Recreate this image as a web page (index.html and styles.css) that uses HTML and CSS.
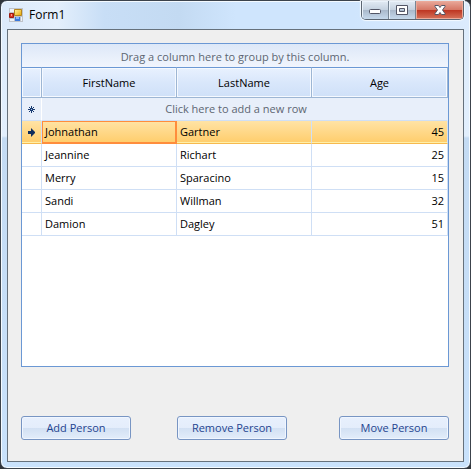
FILE: index.html
```html
<!DOCTYPE html>
<html lang="en">
<head>
<meta charset="utf-8">
<title>Form1</title>
<link rel="stylesheet" href="styles.css">
</head>
<body>
<div class="window">
  <header class="titlebar">
    <svg class="app-icon" width="14" height="14" viewBox="0 0 14 14" aria-hidden="true">
      <defs>
        <linearGradient id="gold" x2="1" y2="1"><stop offset="0" stop-color="#fff3a8"/><stop offset="1" stop-color="#e9a800"/></linearGradient>
      </defs>
      <path d="M0 0h14v14H0z" fill="#bfc3ca"/>
      <path d="M1 1h4v3H1zM1 11h4v2H1zM12 9h1v4h-1z" fill="#eef2f8"/>
      <path d="M5.500 1.500h7v6h-7z" fill="url(#gold)" stroke="#b5851c"/>
      <path d="M.5 5.500h4v4h-4z" fill="#dd3322" stroke="#9c1a12"/>
      <path d="M2 6h1v2H2z" fill="#ff9a85"/>
      <path d="M6 9h5v4H6z" fill="#3b78dc"/>
      <path d="M7 9h3v2H7z" fill="#8db8f5"/>
    </svg>
    <h1 class="title">Form1</h1>
    <div class="controls">
      <button class="control" type="button" aria-label="Minimize">
        <svg width="14" height="14" viewBox="0 0 14 14"><rect x="1.500" y="6.500" width="11" height="4" rx="1" fill="#fff" stroke="#535666"/></svg>
      </button>
      <button class="control" type="button" aria-label="Maximize">
        <svg width="14" height="14" viewBox="0 0 14 14"><path d="M1.500 2.500h11v9h-11zM4.500 5.500h5v3h-5z" fill="#fff" fill-rule="evenodd" stroke="#535666" stroke-linejoin="round"/></svg>
      </button>
      <button class="control close" type="button" aria-label="Close">
        <svg width="14" height="14" viewBox="0 0 14 14"><path d="M2 2.500h3.500L7 4.500l1.500-2H12v1L9.500 7l2.500 3.500v1H8.500L7 9.500l-1.500 2H2v-1L4.500 7 2 3.500z" fill="#fff" stroke="#535666" stroke-linejoin="round"/></svg>
      </button>
    </div>
  </header>
  <main class="client">
    <section class="grid">
      <div class="group-panel">Drag a column here to group by this column.</div>
      <table class="people">
        <colgroup><col class="col-marker"><col class="col-name"><col class="col-name"><col></colgroup>
        <thead>
          <tr><th></th><th>FirstName</th><th>LastName</th><th>Age</th></tr>
        </thead>
        <tbody>
          <tr class="new-row">
            <td class="marker"><svg width="9" height="9" viewBox="0 0 9 9"><path d="M4.500 1v7M1 4.500h7M2 2l5 5M7 2L2 7" stroke="#173a70"/><path d="M4 4h1v1H4z" fill="#a9c4ee"/></svg></td>
            <td class="prompt" colspan="3">Click here to add a new row</td>
          </tr>
          <tr class="selected">
            <td class="marker"><svg width="9" height="9" viewBox="0 0 9 9"><path d="M1 3h3V0l4 4v1L4 9V6H1z" fill="#102d5c"/></svg></td>
            <td class="current">Johnathan</td><td>Gartner</td><td class="number">45</td>
          </tr>
          <tr><td></td><td>Jeannine</td><td>Richart</td><td class="number">25</td></tr>
          <tr><td></td><td>Merry</td><td>Sparacino</td><td class="number">15</td></tr>
          <tr><td></td><td>Sandi</td><td>Willman</td><td class="number">32</td></tr>
          <tr><td></td><td>Damion</td><td>Dagley</td><td class="number">51</td></tr>
        </tbody>
      </table>
    </section>
    <div class="actions">
      <button class="action" type="button">Add Person</button>
      <button class="action" type="button">Remove Person</button>
      <button class="action last" type="button">Move Person</button>
    </div>
  </main>
</div>
</body>
</html>
```
FILE: styles.css
```css
* { box-sizing: border-box; }

body {
  margin: 0;
  background: #30343a;
  font: 11px/16px "Open Sans", "Noto Sans", sans-serif;
  color: #000;
}

.window {
  display: flex;
  flex-direction: column;
  min-height: 100vh;
  padding: 0 6px 6px;
  border: 1px solid #3c434c;
  border-radius: 7px;
  box-shadow: inset 0 0 0 1px #f4faff;
  background:
    linear-gradient(90deg, #dceafb, #e4effc 12%, #c8def6 22%, #c3daf2 38%, #cfe5fd 50%, #cfe5fd 75%, #dcebfd) top / 100% 28px no-repeat,
    linear-gradient(#dcebfb 0, #e2effd 135px, #c4dbf3 137px, #c9e2fc);
}

.titlebar {
  display: flex;
  flex: none;
  align-items: flex-start;
  height: 28px;
  padding-left: 2px;
}

.app-icon { margin-top: 7px; }

.title {
  flex: 1;
  margin: 4px 0 0 6px;
  font-size: 12px;
  font-weight: 400;
  line-height: 20px;
}

.controls {
  display: flex;
  height: 19px;
  border: 1px solid #5c6672;
  border-top: 0;
  border-radius: 0 0 5px 5px;
  overflow: hidden;
  box-shadow: 0 0 1px 1px #f4faff;
}

.control {
  display: flex;
  align-items: center;
  justify-content: center;
  width: 27px;
  padding: 0 0 1px;
  border: 0;
  border-right: 1px solid #788694;
  background: linear-gradient(#e3ebf4, #c5d2e0 48%, #a9b8ca 50%, #c6d9ec);
  box-shadow: inset 1px 1px #eaf2fa;
}

.close {
  width: 47px;
  border-right: 0;
  background: linear-gradient(#e9a99b, #d67866 48%, #bd3420 50%, #d6735b);
  box-shadow: inset 0 0 0 1px #eba999;
}

.client {
  display: flex;
  flex: 1;
  flex-direction: column;
  padding: 13px 14px 21px 13px;
  border: 1px solid #66717c;
  background: #efefef;
}

.grid {
  flex: 1;
  border: 1px solid #6b98d4;
  background: #fff;
}

.group-panel {
  padding: 5px 0 2px;
  background: linear-gradient(#dde8f8, #f1f5fd);
  color: #5d6672;
  text-align: center;
}

.people {
  width: 100%;
  border-spacing: 0;
  table-layout: fixed;
}

.col-marker { width: 20px; }
.col-name { width: 135px; }

.people th {
  height: 31px;
  padding: 0;
  border: solid #9db6d4;
  border-width: 1px 1px 1px 0;
  border-top-color: #6b98d4;
  background: linear-gradient(#e8f1fe, #d9e7fb 50%, #cfe0f8);
  box-shadow: inset 0 0 0 1px #f5f9ff;
  font-weight: 400;
}

.people td {
  height: 23px;
  padding: 0 3px;
  border: solid #cfdff5;
  border-width: 0 1px 1px 0;
}

.people .new-row td {
  border-right-color: #fff;
  background: #e8effa;
  color: #5d6672;
  text-align: center;
}

.people .new-row .prompt {
  padding-right: 20px;
  border-right-color: #e8effa;
}

.people .marker { padding: 0; text-align: center; }

.marker svg {
  display: block;
  margin: 0 auto;
}

.people .selected td {
  border-bottom-color: #f7b94e;
  background: linear-gradient(#ffe3a5, #ffcd6b);
  box-shadow: inset 0 -1px #fff0a8;
}

.people .selected .current {
  border-color: #ff8d3c;
  box-shadow: inset 0 0 0 1px #ff8d3c;
}

.people .number { text-align: right; }

.actions {
  display: flex;
  flex: none;
  margin-top: 49px;
  gap: 46px;
}

.action {
  width: 110px;
  height: 24px;
  padding: 0;
  border: 1px solid #7895c3;
  border-radius: 3px;
  background: linear-gradient(#e8f0fd, #e4edfb 48%, #d2e0f3 50%, #e3edfa);
  box-shadow: inset 0 0 0 1px #f0f6ff;
  color: #1f4490;
  font: inherit;
}

.last { margin-left: auto; }
```
